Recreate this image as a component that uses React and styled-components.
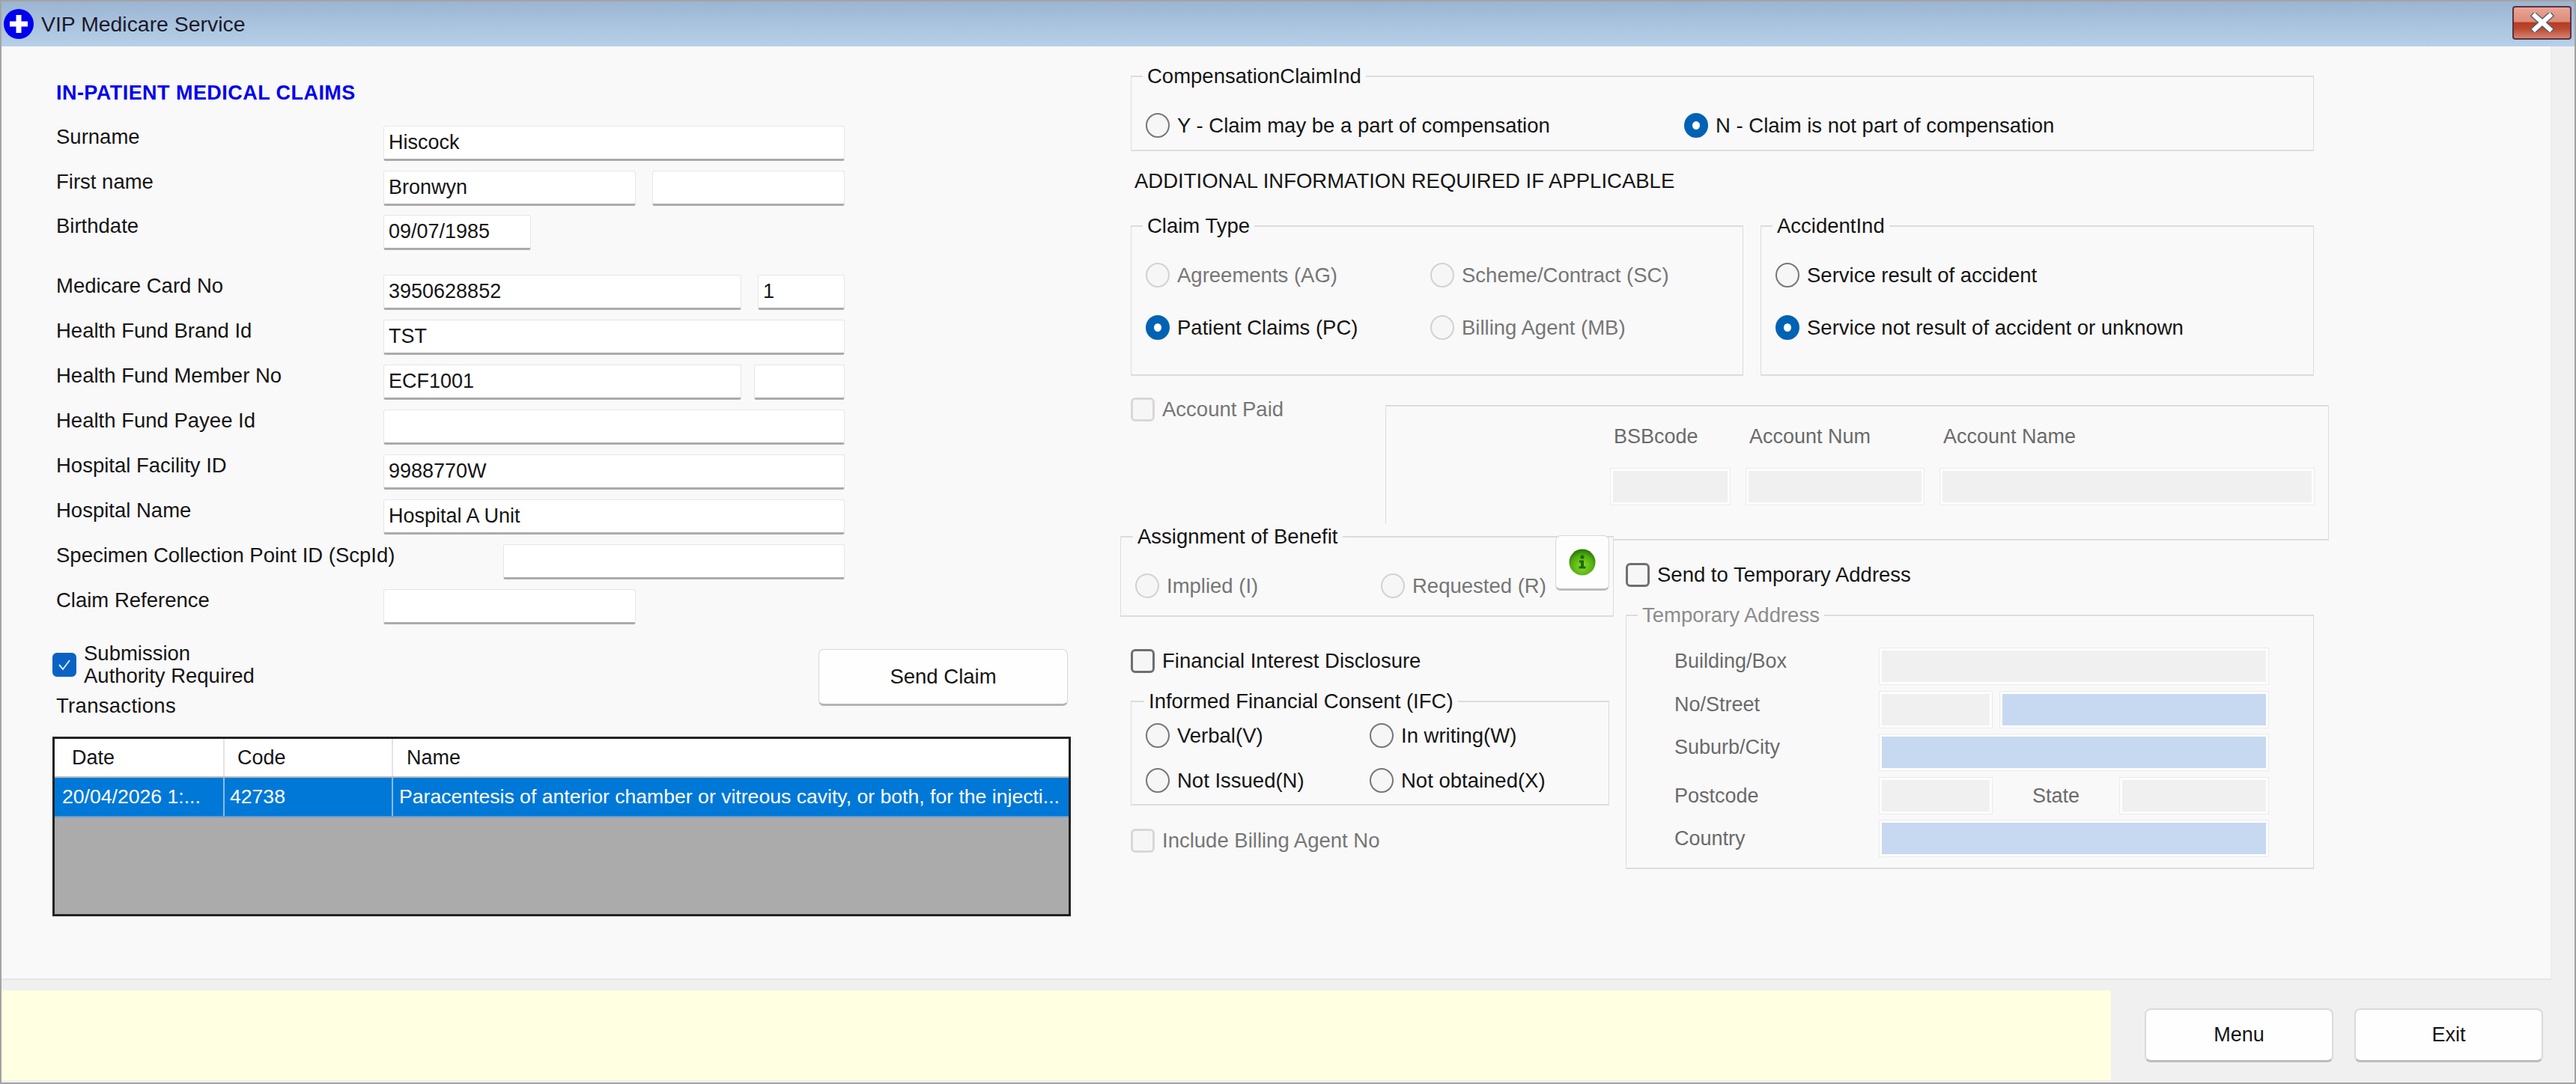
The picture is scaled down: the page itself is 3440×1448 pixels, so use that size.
import styled, { createGlobalStyle } from "styled-components";

let GlobalStyle = createGlobalStyle`
  * {
    box-sizing: border-box;
  }
  html,
  body {
    margin: 0;
    padding: 0;
    background: #f0f0f0;
  }
  body {
    font-family: "Liberation Sans", Arial, sans-serif;
    font-size: 27.5px;
    color: #151515;
  }
`;

let Window = styled.div`
  width: 3440px;
  height: 1448px;
  border: 2px solid #a3a3a3;
  display: flex;
  flex-direction: column;
  overflow: hidden;
  background: #f0f0f0;
`;

let TitleBar = styled.div`
  height: 60px;
  flex: none;
  display: flex;
  align-items: center;
  background: linear-gradient(180deg, #9bb5d2 0%, #b7d0e9 100%);
  padding-left: 3px;
  position: relative;
`;
let TitleText = styled.span`
  margin-left: 10px;
  font-size: 28.4px;
  color: #1a1a2a;
`;
let CloseButton = styled.div`
  margin-left: auto;
  margin-right: 4px;
  margin-top: -4px;
  width: 79px;
  height: 45px;
  border: 2px solid #5b3143;
  border-radius: 4px;
  background: linear-gradient(180deg, #eaa594 0%, #dc8c7a 46%, #b63c20 50%, #bb4a30 70%, #d58472 100%);
  display: flex;
  align-items: center;
  justify-content: center;
`;

let Main = styled.div`
  flex: none;
  width: 3406px;
  height: 1247px;
  background: #f9f9f9;
  border-right: 2px solid #ececec;
  border-bottom: 2px solid #e6e6e6;
  display: flex;
`;

let LeftColumn = styled.div`
  width: 1360px;
  margin-left: 68px;
  padding-top: 45px;
  flex: none;
`;
let Heading = styled.div`
  margin-left: 5px;
  padding-top: 2px;
  height: 30px;
  line-height: 30px;
  font-size: 27px;
  font-weight: bold;
  color: #0000ee;
  letter-spacing: 0.45px;
  margin-bottom: 31px;
`;
let Row = styled.div`
  display: flex;
  height: 47px;
  margin-top: ${(props) => props.$top || 13}px;
`;
let FieldLabel = styled.div`
  width: ${(props) => props.$w || 437}px;
  margin-left: 5px;
  padding-top: 1px;
  flex: none;
  line-height: 28px;
  white-space: nowrap;
`;
let Field = styled.div`
  width: ${(props) => props.$w}px;
  margin-left: ${(props) => props.$gap || 0}px;
  height: 47px;
  flex: none;
  display: flex;
  align-items: center;
  padding: 0 0 0 6px;
  font-size: 27px;
  background: #ffffff;
  border: 1px solid #e6e6e6;
  border-bottom: 3px solid #ababab;
  border-radius: 3px;
`;

let SubmitRow = styled.div`
  display: flex;
  justify-content: space-between;
  margin-top: 24px;
  padding-right: 4px;
`;
let CheckWrap = styled.div`
  display: flex;
  align-items: center;
  gap: 10px;
`;
let TwoLines = styled.div`
  line-height: 30px;
`;
let TransactionsLabel = styled.div`
  margin: 10px 0 0 5px;
  line-height: 30px;
  letter-spacing: 0.3px;
`;
let SendButton = styled.div`
  width: 333px;
  height: 76px;
  margin-top: 9px;
  display: flex;
  align-items: center;
  justify-content: center;
  background: #fefefe;
  border: 1px solid #d6d6d6;
  border-bottom: 3px solid #b4b4b4;
  border-radius: 7px;
`;

let Grid = styled.div`
  margin-top: 26px;
  height: 240px;
  border: 3px solid #222222;
  background: #ababab;
`;
let GridRow = styled.div`
  display: grid;
  grid-template-columns: 227px 225px 1fr;
  height: ${(props) => (props.$head ? 52 : 53)}px;
  font-size: ${(props) => (props.$head ? 27 : 26.6)}px;
  background: ${(props) => (props.$head ? "#ffffff" : "#0078d7")};
  color: ${(props) => (props.$head ? "#151515" : "#ffffff")};
  border-bottom: 2px solid ${(props) => (props.$head ? "#b8b8b8" : "#6a9fcf")};
`;
let GridCell = styled.div`
  display: flex;
  align-items: center;
  white-space: nowrap;
  padding-left: ${(props) => props.$pad}px;
  border-right: 2px solid ${(props) => (props.$head ? "#e4e4e4" : "#8dbbe3")};
  &:last-child {
    border-right: none;
  }
`;

let RightColumn = styled.div`
  width: 1600px;
  margin-left: 80px;
  padding-top: 39px;
  flex: none;
`;
let GroupBox = styled.div`
  position: relative;
  width: ${(props) => props.$w}px;
  height: ${(props) => props.$h}px;
  border: 1px solid #dcdcdc;
  border-top-width: 2px;
  border-bottom-width: 2px;
  padding: ${(props) => props.$pt || 48}px 0 0 ${(props) => props.$pl || 19}px;
`;
let Legend = styled.span`
  position: absolute;
  left: ${(props) => props.$left || 15}px;
  top: -16px;
  line-height: 30px;
  padding: 0 6px;
  background: #f9f9f9;
  color: ${(props) => (props.$dim ? "#8c8c8c" : "inherit")};
`;
let OptionGrid = styled.div`
  display: grid;
  grid-template-columns: ${(props) => props.$cols || "1fr"};
  row-gap: ${(props) => props.$gap || 37}px;
`;
let Option = styled.div`
  display: flex;
  align-items: center;
  gap: 10px;
  height: 33px;
  white-space: nowrap;
  color: ${(props) => (props.$dim ? "#767676" : "inherit")};
`;
let RadioDot = styled.span`
  flex: none;
  width: 32px;
  height: 33px;
  border-radius: 50%;
  background: ${(props) => (props.$on ? "#ffffff" : "#f6f6f6")};
  border: ${(props) =>
    props.$on ? "11px solid #0062b4" : props.$dim ? "2px solid #d2d2d2" : "2px solid #777777"};
`;
let CheckBox = styled.span`
  flex: none;
  width: 32px;
  height: 32px;
  border-radius: 6px;
  display: flex;
  align-items: center;
  justify-content: center;
  background: ${(props) => (props.$on ? "#0a63c4" : "#f6f6f6")};
  border: 3px solid ${(props) => (props.$on ? "#0a63c4" : props.$dim ? "#d8d8d8" : "#6f6f6f")};
`;
let InfoLine = styled.div`
  margin: 25px 0 44px 5px;
  line-height: 30px;
  height: 30px;
`;
let PairRow = styled.div`
  display: flex;
  gap: 23px;
`;
let AccountRow = styled.div`
  display: flex;
  align-items: flex-start;
  margin-top: 28px;
`;
let AccountCheck = styled.div`
  width: 340px;
  flex: none;
`;
let AccountPanel = styled.div`
  margin-top: 11px;
  width: 1260px;
  height: 181px;
  border: 1px solid #dcdcdc;
  border-top-width: 2px;
  border-bottom-width: 2px;
  padding: 25px 0 0 300px;
  display: grid;
  grid-template-columns: 159px 237px 499px;
  grid-template-rows: 30px 48px;
  column-gap: 22px;
  row-gap: 28px;
`;
let DimLabel = styled.div`
  padding-left: 4px;
  line-height: 30px;
  font-size: 27px;
  color: #6a6a6a;
`;
let DimField = styled.div`
  width: ${(props) => (props.$w ? props.$w + "px" : "auto")};
  height: 48px;
  flex: none;
  margin-left: ${(props) => props.$gap || 0}px;
  background: ${(props) => (props.$blue ? "#c7d9f1" : "#f0f0f0")};
  border: 3px solid #fdfdfd;
  box-shadow: 0 0 0 1px #ebebeb;
`;
let LowerRow = styled.div`
  display: grid;
  grid-template-columns: 645px 919px;
  column-gap: 16px;
`;
let BenefitBox = styled(GroupBox)`
  margin: -6px 0 0 -14px;
  background: #f9f9f9;
  z-index: 1;
  &::before {
    content: "";
    position: absolute;
    left: -1px;
    right: -1px;
    top: -18px;
    height: 16px;
    background: #f9f9f9;
  }
`;
let InfoButton = styled.div`
  position: absolute;
  top: -3px;
  right: 5px;
  width: 72px;
  height: 74px;
  display: flex;
  align-items: center;
  justify-content: center;
  background: #fdfdfd;
  border: 1px solid #d8d8d8;
  border-bottom: 3px solid #bcbcbc;
  border-radius: 7px;
`;
let Spaced = styled.div`
  margin-top: ${(props) => props.$top}px;
`;
let AddressRows = styled.div`
  display: flex;
  flex-direction: column;
  gap: 9.5px;
`;
let AddressRow = styled.div`
  display: flex;
  align-items: ${(props) => (props.$raised ? "flex-start" : "center")};
  height: 48px;
`;
let AddressLabel = styled.div`
  width: ${(props) => props.$w || 274}px;
  margin-left: ${(props) => props.$left || 0}px;
  flex: none;
  line-height: 30px;
  font-size: 27px;
  margin-top: ${(props) => (props.$raised ? 2 : 0)}px;
  color: #6a6a6a;
`;

let BottomBar = styled.div`
  flex: 1;
  display: flex;
  padding-top: 14px;
`;
let StatusBox = styled.div`
  width: 2817px;
  height: 120px;
  background: #ffffe1;
`;
let BottomButton = styled.div`
  width: 252px;
  height: 72px;
  margin-top: 24px;
  margin-left: ${(props) => props.$left}px;
  display: flex;
  align-items: center;
  justify-content: center;
  font-size: 27px;
  background: #fefefe;
  border: 2px solid #dadada;
  border-bottom: 3px solid #bcbcbc;
  border-radius: 8px;
`;

function AppIcon() {
  return (
    <svg width="40" height="40" viewBox="0 0 40 40">
      <circle cx="20" cy="20" r="20" fill="#0000ee" />
      <path d="M20 8v24M8 20h24" stroke="#ffffff" strokeWidth="7" />
    </svg>
  );
}

function CloseGlyph() {
  return (
    <svg width="32" height="26" viewBox="0 0 32 26">
      <path d="M6 4l20 18M26 4L6 22" stroke="#59616b" strokeWidth="9" strokeLinecap="square" />
      <path d="M6 4l20 18M26 4L6 22" stroke="#ffffff" strokeWidth="6" strokeLinecap="square" />
    </svg>
  );
}

function InfoGlyph() {
  return (
    <svg width="36" height="36" viewBox="0 0 36 36">
      <defs>
        <radialGradient id="greenBall" cx="50%" cy="65%" r="60%">
          <stop offset="0%" stopColor="#8fdc2c" />
          <stop offset="70%" stopColor="#4fae10" />
          <stop offset="100%" stopColor="#2c7d08" />
        </radialGradient>
      </defs>
      <circle cx="18" cy="18" r="17.5" fill="url(#greenBall)" />
      <circle cx="18" cy="11" r="2.6" fill="#1d6a06" />
      <path d="M14 15.5h6v8h2.5v3h-9v-3H16v-5h-2z" fill="#1d6a06" />
    </svg>
  );
}

function TickGlyph() {
  return (
    <svg width="20" height="18" viewBox="0 0 20 18">
      <path d="M3 9l5 6 9-12" fill="none" stroke="#d8e8fa" strokeWidth="2" />
    </svg>
  );
}

function RadioOption({ label, on, dim }) {
  return (
    <Option $dim={dim}>
      <RadioDot $on={on} $dim={dim} />
      {label}
    </Option>
  );
}

function CheckOption({ label, dim }) {
  return (
    <Option $dim={dim}>
      <CheckBox $dim={dim} />
      {label}
    </Option>
  );
}

export default function App() {
  return (
    <Window>
      <GlobalStyle />
      <TitleBar>
        <AppIcon />
        <TitleText>VIP Medicare Service</TitleText>
        <CloseButton>
          <CloseGlyph />
        </CloseButton>
      </TitleBar>

      <Main>
        <LeftColumn>
          <Heading>IN-PATIENT MEDICAL CLAIMS</Heading>
          <Row $top={1}>
            <FieldLabel>Surname</FieldLabel>
            <Field $w={616}>Hiscock</Field>
          </Row>
          <Row>
            <FieldLabel>First name</FieldLabel>
            <Field $w={337}>Bronwyn</Field>
            <Field $w={257} $gap={22} />
          </Row>
          <Row $top={12}>
            <FieldLabel>Birthdate</FieldLabel>
            <Field $w={197}>09/07/1985</Field>
          </Row>
          <Row $top={33}>
            <FieldLabel>Medicare Card No</FieldLabel>
            <Field $w={478}>3950628852</Field>
            <Field $w={116} $gap={22}>1</Field>
          </Row>
          <Row>
            <FieldLabel>Health Fund Brand Id</FieldLabel>
            <Field $w={616}>TST</Field>
          </Row>
          <Row>
            <FieldLabel>Health Fund Member No</FieldLabel>
            <Field $w={478}>ECF1001</Field>
            <Field $w={121} $gap={17} />
          </Row>
          <Row>
            <FieldLabel>Health Fund Payee Id</FieldLabel>
            <Field $w={616} />
          </Row>
          <Row>
            <FieldLabel>Hospital Facility ID</FieldLabel>
            <Field $w={616}>9988770W</Field>
          </Row>
          <Row>
            <FieldLabel>Hospital Name</FieldLabel>
            <Field $w={616}>Hospital A Unit</Field>
          </Row>
          <Row>
            <FieldLabel $w={597}>Specimen Collection Point ID (ScpId)</FieldLabel>
            <Field $w={456} />
          </Row>
          <Row>
            <FieldLabel>Claim Reference</FieldLabel>
            <Field $w={337} />
          </Row>

          <SubmitRow>
            <div>
              <CheckWrap>
                <CheckBox $on>
                  <TickGlyph />
                </CheckBox>
                <TwoLines>
                  Submission
                  <br />
                  Authority Required
                </TwoLines>
              </CheckWrap>
              <TransactionsLabel>Transactions</TransactionsLabel>
            </div>
            <SendButton>Send Claim</SendButton>
          </SubmitRow>

          <Grid>
            <GridRow $head>
              <GridCell $head $pad={23}>Date</GridCell>
              <GridCell $head $pad={17}>Code</GridCell>
              <GridCell $head $pad={18}>Name</GridCell>
            </GridRow>
            <GridRow>
              <GridCell $pad={10}>20/04/2026 1:...</GridCell>
              <GridCell $pad={7}>42738</GridCell>
              <GridCell $pad={8}>Paracentesis of anterior chamber or vitreous cavity, or both, for the injecti...</GridCell>
            </GridRow>
          </Grid>
        </LeftColumn>

        <RightColumn>
          <GroupBox $w={1580} $h={101}>
            <Legend>CompensationClaimInd</Legend>
            <OptionGrid $cols="719px 1fr">
              <RadioOption label="Y - Claim may be a part of compensation" />
              <RadioOption label="N - Claim is not part of compensation" on />
            </OptionGrid>
          </GroupBox>

          <InfoLine>ADDITIONAL INFORMATION REQUIRED IF APPLICABLE</InfoLine>

          <PairRow>
            <GroupBox $w={818} $h={201}>
              <Legend>Claim Type</Legend>
              <OptionGrid $cols="380px 1fr">
                <RadioOption label="Agreements (AG)" dim />
                <RadioOption label="Scheme/Contract (SC)" dim />
                <RadioOption label="Patient Claims (PC)" on />
                <RadioOption label="Billing Agent (MB)" dim />
              </OptionGrid>
            </GroupBox>
            <GroupBox $w={739} $h={201}>
              <Legend>AccidentInd</Legend>
              <OptionGrid>
                <RadioOption label="Service result of accident" />
                <RadioOption label="Service not result of accident or unknown" on />
              </OptionGrid>
            </GroupBox>
          </PairRow>

          <AccountRow>
            <AccountCheck>
              <CheckOption label="Account Paid" dim />
            </AccountCheck>
            <AccountPanel>
              <DimLabel>BSBcode</DimLabel>
              <DimLabel>Account Num</DimLabel>
              <DimLabel>Account Name</DimLabel>
              <DimField />
              <DimField />
              <DimField />
            </AccountPanel>
          </AccountRow>

          <LowerRow>
            <div>
              <BenefitBox $w={659} $h={108} $pt={48}>
                <Legend $left={16}>Assignment of Benefit</Legend>
                <OptionGrid $cols="328px 1fr">
                  <RadioOption label="Implied (I)" dim />
                  <RadioOption label="Requested (R)" dim />
                </OptionGrid>
                <InfoButton>
                  <InfoGlyph />
                </InfoButton>
              </BenefitBox>

              <Spaced $top={42}>
                <CheckOption label="Financial Interest Disclosure" />
              </Spaced>

              <Spaced $top={37}>
                <GroupBox $w={639} $h={140} $pt={28}>
                  <Legend $left={17}>Informed Financial Consent (IFC)</Legend>
                  <OptionGrid $cols="299px 1fr" $gap={27}>
                    <RadioOption label="Verbal(V)" />
                    <RadioOption label="In writing(W)" />
                    <RadioOption label="Not Issued(N)" />
                    <RadioOption label="Not obtained(X)" />
                  </OptionGrid>
                </GroupBox>
              </Spaced>

              <Spaced $top={30}>
                <CheckOption label="Include Billing Agent No" dim />
              </Spaced>
            </div>

            <div>
              <Spaced $top={29}>
                <CheckOption label="Send to Temporary Address" />
              </Spaced>
              <Spaced $top={37}>
                <GroupBox $w={919} $h={340} $pt={43} $pl={64}>
                  <Legend $dim>Temporary Address</Legend>
                  <AddressRows>
                    <AddressRow $raised>
                      <AddressLabel $raised>Building/Box</AddressLabel>
                      <DimField $w={519} />
                    </AddressRow>
                    <AddressRow $raised>
                      <AddressLabel $raised>No/Street</AddressLabel>
                      <DimField $w={150} />
                      <DimField $w={358} $blue $gap={11} />
                    </AddressRow>
                    <AddressRow $raised>
                      <AddressLabel $raised>Suburb/City</AddressLabel>
                      <DimField $w={519} $blue />
                    </AddressRow>
                    <AddressRow>
                      <AddressLabel>Postcode</AddressLabel>
                      <DimField $w={150} />
                      <AddressLabel $w={117} $left={54}>State</AddressLabel>
                      <DimField $w={198} />
                    </AddressRow>
                    <AddressRow>
                      <AddressLabel>Country</AddressLabel>
                      <DimField $w={519} $blue />
                    </AddressRow>
                  </AddressRows>
                </GroupBox>
              </Spaced>
            </div>
          </LowerRow>
        </RightColumn>
      </Main>

      <BottomBar>
        <StatusBox />
        <BottomButton $left={45}>Menu</BottomButton>
        <BottomButton $left={28}>Exit</BottomButton>
      </BottomBar>
    </Window>
  );
}
